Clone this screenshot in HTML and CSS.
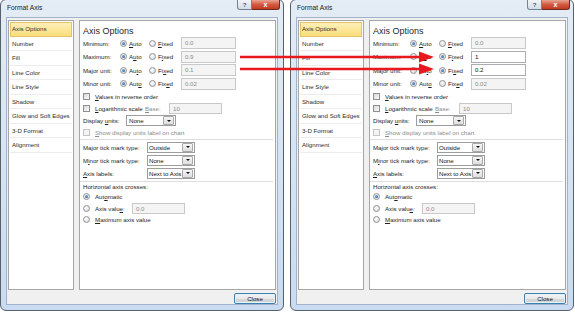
FILE: index.html
```html
<!DOCTYPE html>
<html lang="en">
<head>
    <meta charset="UTF-8">
    <title>Format Axis</title>
    <link rel="stylesheet" href="styles.css">
</head>
<body>
    <div class="screen">
        <!-- before: everything on Auto -->
        <div class="window">
            <div class="titlebar">
                <span class="title">Format Axis</span>
                <span class="tb-help">?</span>
                <span class="tb-close">x</span>
            </div>
            <div class="client">
                <div class="panes">
                    <div class="nav">
                        <div class="nav-item active">Axis Options</div>
                        <div class="nav-item">Number</div>
                        <div class="nav-item">Fill</div>
                        <div class="nav-item">Line Color</div>
                        <div class="nav-item">Line Style</div>
                        <div class="nav-item">Shadow</div>
                        <div class="nav-item">Glow and Soft Edges</div>
                        <div class="nav-item">3-D Format</div>
                        <div class="nav-item">Alignment</div>
                    </div>
                    <div class="panel">
                        <div class="panel-title">Axis Options</div>
                        <div class="axis-row">
                            <span>Minimum:</span>
                            <span class="opt"><span class="radio on"></span><span><u>A</u>uto</span></span>
                            <span class="opt"><span class="radio"></span><span><u>F</u>ixed</span></span>
                            <span class="field off">0.0</span>
                        </div>
                        <div class="axis-row">
                            <span>Maximum:</span>
                            <span class="opt"><span class="radio on"></span><span>A<u>u</u>to</span></span>
                            <span class="opt"><span class="radio"></span><span>F<u>i</u>xed</span></span>
                            <span class="field off">0.9</span>
                        </div>
                        <div class="axis-row">
                            <span>Major unit:</span>
                            <span class="opt"><span class="radio on"></span><span>Au<u>t</u>o</span></span>
                            <span class="opt"><span class="radio"></span><span>Fi<u>x</u>ed</span></span>
                            <span class="field off">0.1</span>
                        </div>
                        <div class="axis-row">
                            <span>Minor unit:</span>
                            <span class="opt"><span class="radio on"></span><span>Aut<u>o</u></span></span>
                            <span class="opt"><span class="radio"></span><span>Fix<u>e</u>d</span></span>
                            <span class="field off">0.02</span>
                        </div>
                        <div class="check-row">
                            <span class="check"></span><span><u>V</u>alues in reverse order</span>
                        </div>
                        <div class="check-row log-row">
                            <span class="check-label"><span class="check"></span><span><u>L</u>ogarithmic scale</span></span>
                            <span class="muted"><u>B</u>ase:</span>
                            <span class="field off">10</span>
                        </div>
                        <div class="check-row units-row">
                            <span>Display <u>u</u>nits:</span>
                            <span class="select"><span class="select-text">None</span><span class="select-btn"><span class="arrow"></span></span></span>
                        </div>
                        <div class="check-row muted">
                            <span class="check dim"></span><span><u>S</u>how display units label on chart</span>
                        </div>
                        <div class="sep first"></div>
                        <div class="tick-row">
                            <span>Ma<u>j</u>or tick mark type:</span>
                            <span class="select"><span class="select-text">Outside</span><span class="select-btn"><span class="arrow"></span></span></span>
                        </div>
                        <div class="tick-row">
                            <span>M<u>i</u>nor tick mark type:</span>
                            <span class="select"><span class="select-text">None</span><span class="select-btn"><span class="arrow"></span></span></span>
                        </div>
                        <div class="tick-row">
                            <span><u>A</u>xis labels:</span>
                            <span class="select"><span class="select-text">Next to Axis</span><span class="select-btn"><span class="arrow"></span></span></span>
                        </div>
                        <div class="sep second"></div>
                        <div class="cross-title">Horizontal axis crosses:</div>
                        <div class="radio-row">
                            <span class="radio on"></span><span>Aut<u>o</u>matic</span>
                        </div>
                        <div class="radio-row value-row">
                            <span class="opt"><span class="radio"></span><span>Axis valu<u>e</u>:</span></span>
                            <span class="field off">0.0</span>
                        </div>
                        <div class="radio-row">
                            <span class="radio"></span><span><u>M</u>aximum axis value</span>
                        </div>
                    </div>
                </div>
                <div class="footer">
                    <span class="btn">Close</span>
                </div>
            </div>
        </div>

        <!-- after: maximum and major unit fixed -->
        <div class="window">
            <div class="titlebar">
                <span class="title">Format Axis</span>
                <span class="tb-help">?</span>
                <span class="tb-close">x</span>
            </div>
            <div class="client">
                <div class="panes">
                    <div class="nav">
                        <div class="nav-item active">Axis Options</div>
                        <div class="nav-item">Number</div>
                        <div class="nav-item">Fill</div>
                        <div class="nav-item">Line Color</div>
                        <div class="nav-item">Line Style</div>
                        <div class="nav-item">Shadow</div>
                        <div class="nav-item">Glow and Soft Edges</div>
                        <div class="nav-item">3-D Format</div>
                        <div class="nav-item">Alignment</div>
                    </div>
                    <div class="panel">
                        <div class="panel-title">Axis Options</div>
                        <div class="axis-row">
                            <span>Minimum:</span>
                            <span class="opt"><span class="radio on"></span><span><u>A</u>uto</span></span>
                            <span class="opt"><span class="radio"></span><span><u>F</u>ixed</span></span>
                            <span class="field off">0.0</span>
                        </div>
                        <div class="axis-row">
                            <span>Maximum:</span>
                            <span class="opt"><span class="radio"></span><span>A<u>u</u>to</span></span>
                            <span class="opt"><span class="radio on"></span><span>F<u>i</u>xed</span></span>
                            <span class="field">1</span>
                        </div>
                        <div class="axis-row">
                            <span>Major unit:</span>
                            <span class="opt"><span class="radio"></span><span>Au<u>t</u>o</span></span>
                            <span class="opt"><span class="radio on"></span><span>Fi<u>x</u>ed</span></span>
                            <span class="field">0.2</span>
                        </div>
                        <div class="axis-row">
                            <span>Minor unit:</span>
                            <span class="opt"><span class="radio on"></span><span>Aut<u>o</u></span></span>
                            <span class="opt"><span class="radio"></span><span>Fix<u>e</u>d</span></span>
                            <span class="field off">0.02</span>
                        </div>
                        <div class="check-row">
                            <span class="check"></span><span><u>V</u>alues in reverse order</span>
                        </div>
                        <div class="check-row log-row">
                            <span class="check-label"><span class="check"></span><span><u>L</u>ogarithmic scale</span></span>
                            <span class="muted"><u>B</u>ase:</span>
                            <span class="field off">10</span>
                        </div>
                        <div class="check-row units-row">
                            <span>Display <u>u</u>nits:</span>
                            <span class="select"><span class="select-text">None</span><span class="select-btn"><span class="arrow"></span></span></span>
                        </div>
                        <div class="check-row muted">
                            <span class="check dim"></span><span><u>S</u>how display units label on chart</span>
                        </div>
                        <div class="sep first"></div>
                        <div class="tick-row">
                            <span>Ma<u>j</u>or tick mark type:</span>
                            <span class="select"><span class="select-text">Outside</span><span class="select-btn"><span class="arrow"></span></span></span>
                        </div>
                        <div class="tick-row">
                            <span>M<u>i</u>nor tick mark type:</span>
                            <span class="select"><span class="select-text">None</span><span class="select-btn"><span class="arrow"></span></span></span>
                        </div>
                        <div class="tick-row">
                            <span><u>A</u>xis labels:</span>
                            <span class="select"><span class="select-text">Next to Axis</span><span class="select-btn"><span class="arrow"></span></span></span>
                        </div>
                        <div class="sep second"></div>
                        <div class="cross-title">Horizontal axis crosses:</div>
                        <div class="radio-row">
                            <span class="radio on"></span><span>Aut<u>o</u>matic</span>
                        </div>
                        <div class="radio-row value-row">
                            <span class="opt"><span class="radio"></span><span>Axis valu<u>e</u>:</span></span>
                            <span class="field off">0.0</span>
                        </div>
                        <div class="radio-row">
                            <span class="radio"></span><span><u>M</u>aximum axis value</span>
                        </div>
                    </div>
                </div>
                <div class="footer">
                    <span class="btn">Close</span>
                </div>
            </div>
        </div>

        <!-- red arrows drawn over both dialogs -->
        <svg class="arrows" width="575" height="314" viewBox="0 0 575 314">
            <line x1="240" y1="57" x2="422" y2="57" stroke="#e8191c" stroke-width="2.6"/>
            <polygon points="419,51.5 434,57 419,62.5" fill="#e8191c"/>
            <line x1="240" y1="69" x2="422" y2="69" stroke="#e8191c" stroke-width="2.6"/>
            <polygon points="419,63.5 434,69 419,74.5" fill="#e8191c"/>
        </svg>
    </div>
</body>
</html>
```

FILE: styles.css
```css
body {
    margin: 0;
    background-color: #fff;
    font-family: "Liberation Sans", Arial, sans-serif;
    font-size: 6.15px;
    color: #1e1e1e;
}
u {
    text-decoration-thickness: 0.5px;
}
.screen {
    position: relative;
    display: flex;
    gap: 6px;
}
.window {
    width: 284px;
    height: 312px;
    margin-top: -1px;
    box-sizing: border-box;
    border: 1px solid #56616e;
    border-radius: 6px;
    background: linear-gradient(#e4ecf5, #c9dbf0);
    padding: 0 5px 5px;
    display: flex;
    flex-direction: column;
}
.titlebar {
    height: 17px;
    display: flex;
    align-items: flex-start;
    flex-shrink: 0;
}
.title {
    flex: 1;
    margin-left: 1px;
    padding-top: 4px;
    line-height: 8px;
    font-size: 6.7px;
    color: #1b1b1b;
}
.tb-help,
.tb-close {
    height: 10px;
    box-sizing: border-box;
    display: flex;
    align-items: center;
    justify-content: center;
    font-weight: bold;
}
.tb-help {
    width: 15px;
    border: 1px solid #76838f;
    border-top: none;
    border-radius: 0 0 0 3px;
    background: linear-gradient(#f2f5f9, #d2dce8);
    color: #4b5560;
    font-size: 6px;
}
.tb-close {
    width: 28px;
    margin-right: -2px;
    border: 1px solid #6d2b20;
    border-top: none;
    border-left: none;
    border-radius: 0 0 3px 0;
    background: linear-gradient(#e9a594, #d35a41 50%, #c13a22);
    color: #fff;
    font-size: 7px;
}
.client {
    flex: 1;
    display: flex;
    flex-direction: column;
    background-color: #f0f0f0;
    border: 1px solid #9fb3ca;
    padding: 2px 1px 0 1px;
}
.panes {
    flex: 1;
    display: flex;
    gap: 5px;
}
.nav {
    width: 66px;
    box-sizing: border-box;
    background-color: #fff;
    border: 1px solid #a7a7a7;
    padding: 1px;
}
.nav-item {
    height: 13.5px;
    line-height: 13.5px;
    padding-left: 2px;
    border-bottom: 1px solid #ececec;
    color: #2e2e2e;
    white-space: nowrap;
}
.nav-item.active {
    height: 12.5px;
    line-height: 12.5px;
    padding-left: 1px;
    border: 1px solid #e3c46c;
    background: linear-gradient(#fdf0b8, #fbdc7a);
}
.panel {
    flex: 1;
    background-color: #fff;
    border: 1px solid #a7a7a7;
    padding: 0 2px 0 3px;
}
.panel-title {
    margin-top: 3.5px;
    height: 12px;
    line-height: 12px;
    font-size: 9px;
    color: #1f1f1f;
}
.axis-row {
    display: grid;
    grid-template-columns: 37px 29px 32px 55px;
    align-items: center;
    height: 13.5px;
    white-space: nowrap;
}
.opt {
    display: flex;
    align-items: center;
    gap: 2px;
}
.radio {
    position: relative;
    display: inline-block;
    flex-shrink: 0;
    width: 7px;
    height: 7px;
    box-sizing: border-box;
    border: 1px solid #939393;
    border-radius: 50%;
    background: radial-gradient(circle at 40% 35%, #fff, #d4d4d4);
}
.radio.on::after {
    content: "";
    position: absolute;
    left: 1px;
    top: 1px;
    width: 3px;
    height: 3px;
    border-radius: 50%;
    background: radial-gradient(circle at 40% 35%, #6fa6de, #1e5a9e);
}
.field {
    height: 12px;
    box-sizing: border-box;
    border: 1px solid #abadb3;
    background-color: #fff;
    padding-left: 3px;
    line-height: 10px;
    color: #111;
}
.field.off {
    border-color: #c9c9c9;
    background-color: #f4f4f4;
    color: #8a8a8a;
}
.check-row {
    display: flex;
    align-items: center;
    height: 12px;
    white-space: nowrap;
}
.check {
    display: inline-block;
    flex-shrink: 0;
    width: 7px;
    height: 7px;
    box-sizing: border-box;
    margin-right: 5px;
    border: 1px solid #8e8f8f;
    background: linear-gradient(135deg, #d9d9d9, #fafafa);
}
.check.dim {
    border-color: #c4c4c4;
    background: #f4f4f4;
}
.check-label {
    display: flex;
    align-items: center;
    width: 62px;
}
.log-row .muted {
    width: 24px;
}
.log-row .field {
    width: 53px;
    height: 11px;
    line-height: 9px;
}
.muted {
    color: #8d8d8d;
}
.units-row > span:first-child {
    width: 43px;
}
.select {
    display: flex;
    align-items: center;
    height: 11px;
    box-sizing: border-box;
    border: 1px solid #9d9d9d;
    background-color: #fff;
    padding-left: 2px;
    color: #111;
    white-space: nowrap;
}
.select-text {
    flex: 1;
    min-width: 0;
}
.units-row .select {
    width: 50px;
}
.select-btn {
    display: flex;
    align-items: center;
    justify-content: center;
    flex-shrink: 0;
    width: 9px;
    height: 7px;
    margin-right: 1px;
    border: 1px solid #a9a9a9;
    border-radius: 1px;
    background: linear-gradient(#f6f6f6, #dedede);
}
.arrow {
    width: 0;
    height: 0;
    border-left: 2px solid transparent;
    border-right: 2px solid transparent;
    border-top: 2.5px solid #111;
}
.sep {
    height: 1px;
    margin-left: -3px;
    background-color: #dedede;
}
.sep.first {
    margin-top: 0.5px;
    margin-bottom: 0.5px;
}
.sep.second {
    margin-top: 1.5px;
}
.tick-row {
    display: grid;
    grid-template-columns: 64px 48px;
    align-items: center;
    height: 13px;
    white-space: nowrap;
}
.tick-row .select {
    height: 11px;
    padding-left: 1px;
}
.cross-title {
    height: 8.5px;
    line-height: 9px;
}
.radio-row {
    display: flex;
    align-items: center;
    gap: 5px;
    height: 11.7px;
    white-space: nowrap;
}
.radio-row.value-row {
    display: grid;
    grid-template-columns: 49px 53px;
    gap: 0;
}
.value-row .opt {
    gap: 5px;
}
.value-row .field {
    height: 11px;
    line-height: 9px;
}
.footer {
    height: 14px;
    display: flex;
    justify-content: flex-end;
    align-items: flex-start;
}
.btn {
    width: 42px;
    height: 11px;
    margin-top: 3px;
    box-sizing: border-box;
    border: 1px solid #3c7fb1;
    border-radius: 2px;
    background: linear-gradient(#f5f5f5, #e8e8e8 50%, #d9d9d9 51%, #d0d0d0);
    box-shadow: inset 0 0 0 1px #e6f2fa;
    line-height: 9px;
    text-align: center;
    color: #111;
}
.arrows {
    position: absolute;
    left: 0;
    top: 0;
    pointer-events: none;
}
```
